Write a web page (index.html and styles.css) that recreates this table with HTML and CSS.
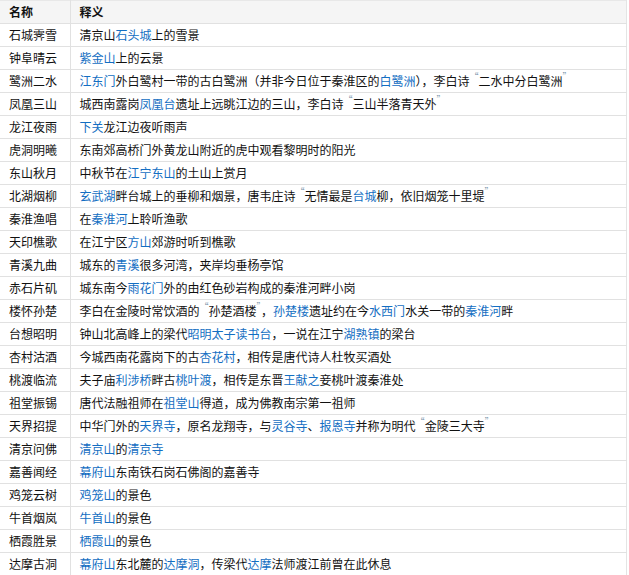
FILE: index.html
```html
<!DOCTYPE html>
<html lang="zh">
<head>
<meta charset="utf-8">
<link rel="stylesheet" href="styles.css">
</head>
<body>
<table class="tbl">
<thead>
<tr><th class="c1">名称</th><th class="c2">释义</th></tr>
</thead>
<tbody>
<tr><td class="c1">石城霁雪</td><td class="c2">清京山<a>石头城</a>上的雪景</td></tr>
<tr><td class="c1">钟阜晴云</td><td class="c2"><a>紫金山</a>上的云景</td></tr>
<tr><td class="c1">鹭洲二水</td><td class="c2"><a>江东门</a>外白鹭村一带的古白鹭洲（并非今日位于秦淮区的<a>白鹭洲</a>），李白诗<span class="q">“</span>二水中分白鹭洲<span class="q">”</span></td></tr>
<tr><td class="c1">凤凰三山</td><td class="c2">城西南露岗<a>凤凰台</a>遗址上远眺江边的三山，李白诗<span class="q">“</span>三山半落青天外<span class="q">”</span></td></tr>
<tr><td class="c1">龙江夜雨</td><td class="c2"><a>下关</a>龙江边夜听雨声</td></tr>
<tr><td class="c1">虎洞明曦</td><td class="c2">东南郊高桥门外黄龙山附近的虎中观看黎明时的阳光</td></tr>
<tr><td class="c1">东山秋月</td><td class="c2">中秋节在<a>江宁东山</a>的土山上赏月</td></tr>
<tr><td class="c1">北湖烟柳</td><td class="c2"><a>玄武湖</a>畔台城上的垂柳和烟景，唐韦庄诗<span class="q">“</span>无情最是<a>台城</a>柳，依旧烟笼十里堤<span class="q">”</span></td></tr>
<tr><td class="c1">秦淮渔唱</td><td class="c2">在<a>秦淮河</a>上聆听渔歌</td></tr>
<tr><td class="c1">天印樵歌</td><td class="c2">在江宁区<a>方山</a>郊游时听到樵歌</td></tr>
<tr><td class="c1">青溪九曲</td><td class="c2">城东的<a>青溪</a>很多河湾，夹岸均垂杨亭馆</td></tr>
<tr><td class="c1">赤石片矶</td><td class="c2">城东南今<a>雨花门</a>外的由红色砂岩构成的秦淮河畔小岗</td></tr>
<tr><td class="c1">楼怀孙楚</td><td class="c2">李白在金陵时常饮酒的<span class="q">“</span>孙楚酒楼<span class="q">”</span>，<a>孙楚楼</a>遗址约在今<a>水西门</a>水关一带的<a>秦淮河</a>畔</td></tr>
<tr><td class="c1">台想昭明</td><td class="c2">钟山北高峰上的梁代<a>昭明太子读书台</a>，一说在江宁<a>湖熟镇</a>的梁台</td></tr>
<tr><td class="c1">杏村沽酒</td><td class="c2">今城西南花露岗下的古<a>杏花村</a>，相传是唐代诗人杜牧买酒处</td></tr>
<tr><td class="c1">桃渡临流</td><td class="c2">夫子庙<a>利涉桥</a>畔古<a>桃叶渡</a>，相传是东晋<a>王献之</a>妾桃叶渡秦淮处</td></tr>
<tr><td class="c1">祖堂振锡</td><td class="c2">唐代法融祖师在<a>祖堂山</a>得道，成为佛教南宗第一祖师</td></tr>
<tr><td class="c1">天界招提</td><td class="c2">中华门外的<a>天界寺</a>，原名龙翔寺，与<a>灵谷寺</a>、<a>报恩寺</a>并称为明代<span class="q">“</span>金陵三大寺<span class="q">”</span></td></tr>
<tr><td class="c1">清京问佛</td><td class="c2"><a>清京山</a>的<a>清京寺</a></td></tr>
<tr><td class="c1">嘉善闻经</td><td class="c2"><a>幕府山</a>东南铁石岗石佛阁的嘉善寺</td></tr>
<tr><td class="c1">鸡笼云树</td><td class="c2"><a>鸡笼山</a>的景色</td></tr>
<tr><td class="c1">牛首烟岚</td><td class="c2"><a>牛首山</a>的景色</td></tr>
<tr><td class="c1">栖霞胜景</td><td class="c2"><a>栖霞山</a>的景色</td></tr>
<tr class="last"><td class="c1">达摩古洞</td><td class="c2"><a>幕府山</a>东北麓的<a>达摩洞</a>，传梁代<a>达摩</a>法师渡江前曾在此休息</td></tr>
</tbody>
</table>
</body>
</html>
```
FILE: styles.css
```css
html, body {
  margin: 0;
  padding: 0;
  background: #fff;
}
body {
  font-family: "Noto Sans CJK SC", "Noto Sans", sans-serif;
  font-size: 12px;
  color: #111;
}
.tbl {
  border-collapse: collapse;
  width: 627px;
  table-layout: fixed;
}
.tbl th, .tbl td {
  border: 1px solid #e1e1e1;
  height: 22px;
  padding: 0 0 0 9px;
  line-height: 22px;
  text-align: left;
  white-space: nowrap;
  box-sizing: border-box;
}
.tbl th {
  background: #f5f5f5;
  font-weight: bold;
  height: 23px;
  border-top-color: #e8e8e8;
}
.tbl .c1 {
  width: 70px;
  border-left: none;
}
.tbl .c2 {
  border-right-color: #e4e4e4;
}
.tbl tr.last td {
  border-bottom: 2px solid #cfcfcf;
  height: 22px;
}
.tbl a {
  color: #136ec2;
  text-decoration: none;
}
.q {
  color: #7f98ad;
  font-size: 9px;
  vertical-align: top;
  line-height: 14px;
}
```
